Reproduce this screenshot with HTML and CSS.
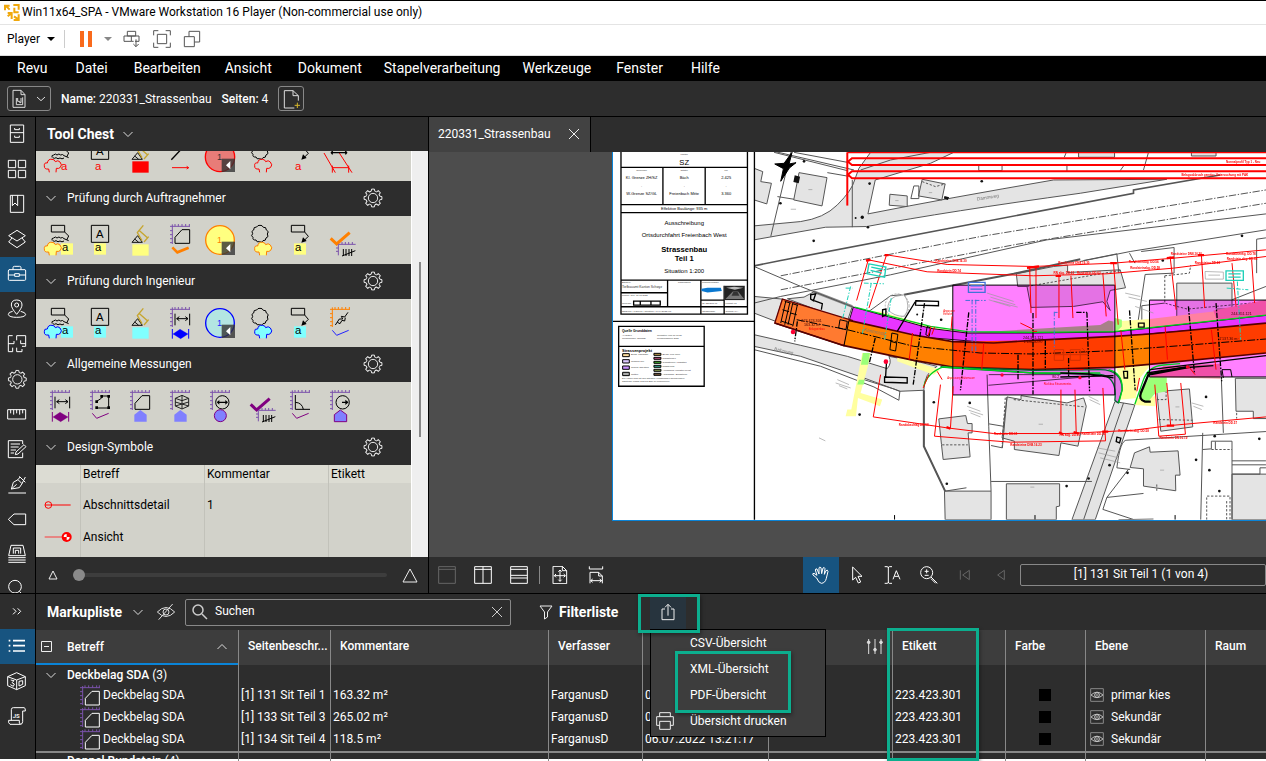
FILE: index.html
```html
<!DOCTYPE html>
<html lang="de">
<head>
<meta charset="utf-8">
<title>Win11x64_SPA - VMware Workstation 16 Player</title>
<link rel="stylesheet" href="styles.css">
</head>
<body>
<svg class="defs" aria-hidden="true">
  <defs>
    <g id="tooth"><path d="M-5.4-20.3L-4.2-26.7H4.2L5.4-20.3Q8-19.6 10.5-18.2"/></g>
    <symbol id="gear" viewBox="-30 -30 60 60"><g fill="none" stroke="#eee" stroke-width="3"><use href="#tooth"/><use href="#tooth" transform="rotate(45)"/><use href="#tooth" transform="rotate(90)"/><use href="#tooth" transform="rotate(135)"/><use href="#tooth" transform="rotate(180)"/><use href="#tooth" transform="rotate(225)"/><use href="#tooth" transform="rotate(270)"/><use href="#tooth" transform="rotate(315)"/><circle r="14"/></g></symbol>
    <symbol id="chev" viewBox="0 0 12 12"><path d="M1.500 4L6 8.500L10.500 4" fill="none" stroke="#ddd"/></symbol>
    <g id="axis" fill="none" stroke="#7b52ab" stroke-width="3"><path d="M37 25V84M30 31H90M45 31V24M55 31V24M66 31V24M77 31V24M88 31V24M37 44H30M37 56H30M37 68H30M37 80H30"/></g>
    <g id="cloudlow"><path d="M28 118L26 108Q12 110 13 98Q12 88 22 90Q24 77 36 79Q44 79 46 86Q54 80 60 87Q68 96 61 103Q56 108 49 106L48 118" stroke-width="3"/></g>
    <g id="squig" fill="none" stroke="#000" stroke-width="3"><path d="M34 28H74V48H34ZM74 48L86 60L80 72M36 73Q34 66 41 66Q46 60 51 66Q57 60 62 66Q68 62 72 68L86 74M38 74Q44 78 48 74Q54 80 60 75Q66 80 72 75"/></g>
    <g id="abox" fill="none" stroke="#000" stroke-width="3"><path d="M34 28H86V79H34Z"/></g>
    <g id="marker" fill="none"><path d="M36 79L53 59L67 79ZM44 69L56 79" stroke="#111" stroke-width="3"/><path d="M70 28L52 50L66 74M56 42L84 67M72 78L86 62" stroke="#c6a52e" stroke-width="4"/></g>
    <g id="badge"><path d="M65 77H105V117H65Z" fill="#333" opacity=".8"/><path d="M91 84V109L78 97Z" fill="#fff"/></g>
    <g id="scallop"><path d="M60 28Q67 27 70 34Q79 32 79 42Q89 46 82 54Q88 63 78 66Q78 75 69 74Q66 82 58 77Q50 80 48 72Q37 73 39 64Q31 60 38 53Q32 45 41 42Q40 32 50 33Q53 27 60 28Z" fill="none" stroke="#000" stroke-width="3"/></g>
    <g id="callout"><path d="M34 28H74V48H34ZM74 48L85 61L74 72" fill="none" stroke="#000" stroke-width="3"/><path d="M64 80L69 64L80 75Z"/></g>
    <g id="vmeas"><path d="M45 44V79M89 44V79M50 59H84M58 53L50 59L58 65M76 53L84 59L76 65" fill="none" stroke="#000" stroke-width="3"/></g>
    <g id="width"><path d="M37 90V119M86 90V119" stroke-width="3"/><path d="M39 105L60 91L84 105L62 119Z"/></g>
    <g id="area"><path d="M45 82V64L66 41H89V82Z" fill="none" stroke-width="3"/></g>
    <g id="tally"><path d="M55 118V85H107M55 96H48M55 106H48M66 85V78M76 85V78M86 85V78M97 85V78" fill="none" stroke="#7b52ab" stroke-width="3"/><path d="M70 99V120M78 99V120M87 99V120M95 99V120M66 120L106 104" fill="none" stroke="#000" stroke-width="3"/></g>
    <symbol id="eye" viewBox="0 0 42 42"><path d="M2 2H40V40H2Z" fill="none" stroke="#888" stroke-width="3"/><path d="M3 21Q21 4 39 21Q21 37 3 21Z" fill="none" stroke="#bbb" stroke-width="3"/><circle cx="21" cy="21" r="7" fill="none" stroke="#ccc" stroke-width="3"/><circle cx="21" cy="21" r="2" fill="#fff"/></symbol>
    <symbol id="markup" viewBox="0 0 60 66"><path d="M8 3V60M0 8H60M15 8V1M26 8V1M38 8V1M50 8V1M58 8V1M8 20H0M8 32H0M8 44H0M8 56H0" fill="none" stroke="#7b52ab" stroke-width="3"/><path d="M16 60V40L36 19H58V60Z" fill="none" stroke="#fff" stroke-width="3"/></symbol>
  </defs>
</svg>

<header class="titlebar">
  <svg width="18" height="18" viewBox="0 0 54 54" fill="none" stroke="#f0a80c" stroke-width="6"><path d="M6 22V8H20M8 8L20 20M31 6H47V20M14 30H26V48M26 30L14 40M33 40L47 50M47 34V51H32M34 14V28H47"/></svg>
  <span>Win11x64_SPA - VMware Workstation 16 Player (Non-commercial use only)</span>
</header>
<div class="vmbar">
  <button class="player">Player <i class="tri"></i></button>
  <span class="vsep"></span>
  <button aria-label="Pause" class="ib"><svg width="30" height="26" viewBox="0 0 30 26"><path d="M6 5H10V21H6ZM14 5H18V21H14Z" fill="#f96a1c"/></svg></button>
  <i class="tri dim"></i>
  <button aria-label="Send keys" class="ib keys"><svg width="18" height="18" viewBox="0 0 54 54" fill="none" stroke="#555" stroke-width="3"><path d="M13 4H38V18H13ZM3 18H25V34H3ZM25 18H48V34H36M25 34H32M39 28V50M31 42L39 50L47 42"/></svg></button>
  <button aria-label="Fullscreen" class="ib"><svg width="18" height="18" viewBox="0 0 54 54" fill="none" stroke="#555" stroke-width="3"><path d="M2 16V2H16M38 2H52V16M52 38V52H38M16 52H2V38M13 13H41V41H13Z"/></svg></button>
  <button aria-label="Unity" class="ib"><svg width="18" height="18" viewBox="0 0 54 54" fill="none" stroke="#555" stroke-width="3"><path d="M4 20H34V50H4ZM18 20V4H50V36H34"/></svg></button>
</div>
<nav class="menubar">
  <a href="#">Revu</a><a href="#">Datei</a><a href="#">Bearbeiten</a><a href="#">Ansicht</a><a href="#">Dokument</a><a href="#">Stapelverarbeitung</a><a href="#">Werkzeuge</a><a href="#">Fenster</a><a href="#">Hilfe</a>
</nav>
<div class="docbar">
  <button class="outline wide" aria-label="Dokument"><svg width="42" height="22" viewBox="0 0 126 66" fill="none" stroke="#ddd" stroke-width="3"><path d="M15 7H39L51 20V58H15ZM39 7V20H51"/><path d="M25 30V50H44V28M29 30V40H35V44H39V30"/><path d="M87 27L99 38L111 27"/></svg></button>
  <span class="name"><b>Name:</b> 220331_Strassenbau</span>
  <span><b>Seiten:</b> 4</span>
  <button class="outline" aria-label="Neue Seite"><svg width="24" height="22" viewBox="0 0 72 66" fill="none" stroke="#ddd" stroke-width="3"><path d="M58 38V23L42 8H16V60H46M42 8V23H58"/><path d="M47 52H63M55 44V60" stroke="#d4b52b"/></svg></button>
</div>

<main class="work">
  <nav class="rail" aria-label="Bereiche">
    <button aria-label="Dateizugriff"><svg viewBox="0 0 105 105"><path d="M31 24H71V76H31ZM31 47H71M44 33V38H58V33M44 56V61H58V56"/></svg></button>
    <button aria-label="Miniaturen"><svg viewBox="0 0 105 105"><path d="M25 25H47V47H25ZM55 25H77V47H55ZM25 55H47V77H25ZM55 55H77V77H55Z"/></svg></button>
    <button aria-label="Lesezeichen"><svg viewBox="0 0 105 105"><path d="M31 25H71V76H31ZM37 25V56L45 48L53 56V25"/></svg></button>
    <button aria-label="Ebenen"><svg viewBox="0 0 105 105"><path d="M51 25L76 41L51 57L26 41ZM36 48L26 60L51 77L76 60L66 48"/></svg></button>
    <button aria-label="Tool Chest" class="on"><svg viewBox="0 0 105 105"><path d="M27 38H75Q77 38 77 42V67Q77 70 74 70H28Q25 70 25 67V42Q25 38 28 38ZM39 38V32Q39 28 43 28H59Q63 28 63 32V38M25 54H44M58 54H77M44 50H58V58H44Z"/></svg></button>
    <button aria-label="Orte"><svg viewBox="0 0 105 105"><path d="M50 67Q34 48 34 39Q34 24 50 24Q66 24 66 39Q66 48 50 67ZM38 58Q24 60 25 68Q28 76 50 76Q74 76 77 68Q77 61 62 58"/><circle cx="50" cy="39" r="6"/></svg></button>
    <button aria-label="Räume"><svg viewBox="0 0 105 105"><path d="M38 26H25V74H38V62M50 26H77V58H66M50 26V40M25 50H42M42 42V50M62 40V50H77M50 62V74H66V66"/></svg></button>
    <button aria-label="Einstellungen"><svg class="gear" viewBox="-52 -52 105 105"><use href="#gear" x="-30" y="-30" width="60" height="60"/></svg></button>
    <button aria-label="Messungen"><svg viewBox="0 0 105 105"><path d="M23 38H77V66H23ZM32 38V49M41 38V53M50 38V49M59 38V53M68 38V49"/></svg></button>
    <button aria-label="Formulare"><svg viewBox="0 0 105 105"><path d="M68 36V26H25V77H68V62M32 36H60M32 45H56M32 54H48M32 63H42M48 60L72 38L78 44L54 66L46 68Z"/></svg></button>
    <button aria-label="Signaturen"><svg viewBox="0 0 105 105"><path d="M25 78H78M34 66L40 46L54 38L66 50L58 62ZM34 66L50 52M58 28L76 46M66 50L76 30M54 38L60 30"/></svg></button>
    <button aria-label="Tags"><svg viewBox="0 0 105 105"><path d="M25 52L42 36H77V68H42Z"/></svg></button>
    <button aria-label="Sets"><svg viewBox="0 0 105 105"><path d="M33 25H69L76 56H26ZM40 50V33H62V50M46 50V40H56V50M25 62H77M25 69H77M25 76H77"/></svg></button>
    <button aria-label="Suchen"><svg viewBox="0 0 105 105"><circle cx="45" cy="44" r="19"/><path d="M58 58L72 72"/></svg></button>
  </nav>

  <section class="chest">
    <h2 class="panelhead">Tool Chest <svg class="c12" width="12" height="12"><use href="#chev"/></svg></h2>
    <div class="scroll">
      <div class="sets">
        <div class="tools first">
          <svg viewBox="0 0 120 144"><use href="#squig"/><use href="#cloudlow" fill="none" stroke="red"/><text x="63" y="110" fill="red">a</text></svg>
          <svg viewBox="0 0 120 144"><use href="#abox"/><text x="48" y="67" class="A">A</text><text x="45" y="110" fill="red">a</text></svg>
          <svg viewBox="0 0 120 144"><use href="#marker"/><path d="M37 85H86V119H37Z" fill="red"/></svg>
          <svg viewBox="0 0 120 144"><path d="M34 80L72 40" stroke="#000" stroke-width="4"/><path d="M36 104H86M80 100L86 104L80 108" stroke="red" stroke-width="3" fill="none"/></svg>
          <svg viewBox="0 0 120 144"><circle cx="60" cy="72" r="44" fill="#e87c78" stroke="red" stroke-width="4"/><text x="51" y="82" class="one" fill="#333">1</text><use href="#badge"/></svg>
          <svg viewBox="0 0 120 144"><use href="#scallop"/><use href="#cloudlow" x="31" fill="none" stroke="red"/></svg>
          <svg viewBox="0 0 120 144"><use href="#callout"/><text x="45" y="110" fill="red">a</text></svg>
          <svg viewBox="0 0 120 144"><path d="M12 60L46 119M58 60L96 119M37 104H86M37 98V119M86 98V119" stroke="red" stroke-width="3"/><path d="M35 59H80M38 54L34 59L38 64M76 54L80 59L76 64" fill="none" stroke="#000" stroke-width="4"/></svg>
        </div>
        <h3><svg class="c12" width="12" height="12"><use href="#chev"/></svg><span>Prüfung durch Auftragnehmer</span><button aria-label="Optionen"><svg width="20" height="20"><use href="#gear"/></svg></button></h3>
        <div class="tools">
          <svg viewBox="0 0 120 144"><use href="#squig"/><path d="M63 82H99V116H63Z" fill="#ffff80"/><use href="#cloudlow" fill="#ffff80" stroke="#ff8000"/><text x="66" y="106">a</text></svg>
          <svg viewBox="0 0 120 144"><use href="#abox"/><text x="48" y="67" class="A">A</text><path d="M42 82H78V116H42Z" fill="#ffff80"/><text x="45" y="106">a</text></svg>
          <svg viewBox="0 0 120 144"><use href="#marker"/><path d="M37 85H86V119H37Z" fill="#ffff80"/></svg>
          <svg viewBox="0 0 120 144"><use href="#axis"/><use href="#area" stroke="#000"/><path d="M37 94L52 109L86 95" fill="none" stroke="#ff8000" stroke-width="8"/></svg>
          <svg viewBox="0 0 120 144"><circle cx="60" cy="72" r="43" fill="#ffff80" stroke="#ff8000" stroke-width="4"/><text x="51" y="81" class="one" fill="#ff8000">1</text><use href="#badge"/></svg>
          <svg viewBox="0 0 120 144"><use href="#scallop"/><use href="#cloudlow" x="31" fill="#ffff80" stroke="#ff8000"/></svg>
          <svg viewBox="0 0 120 144"><use href="#callout"/><path d="M42 82H78V116H42Z" fill="#ffff80"/><text x="45" y="106">a</text></svg>
          <svg viewBox="0 0 120 144"><path d="M32 67L50 84L89 50" fill="none" stroke="#ff8000" stroke-width="9"/><use href="#tally"/></svg>
        </div>
        <h3><svg class="c12" width="12" height="12"><use href="#chev"/></svg><span>Prüfung durch Ingenieur</span><button aria-label="Optionen"><svg width="20" height="20"><use href="#gear"/></svg></button></h3>
        <div class="tools">
          <svg viewBox="0 0 120 144"><use href="#squig"/><path d="M63 82H99V116H63Z" fill="#80ffff"/><use href="#cloudlow" fill="#80ffff" stroke="#00f"/><text x="66" y="106">a</text></svg>
          <svg viewBox="0 0 120 144"><use href="#abox"/><text x="48" y="67" class="A">A</text><path d="M42 82H78V116H42Z" fill="#80ffff"/><text x="45" y="106">a</text></svg>
          <svg viewBox="0 0 120 144"><use href="#marker"/><path d="M37 85H86V119H37Z" fill="#80ffff"/></svg>
          <svg viewBox="0 0 120 144"><use href="#axis"/><use href="#vmeas"/><use href="#width" fill="#00f" stroke="#00f"/></svg>
          <svg viewBox="0 0 120 144"><circle cx="60" cy="72" r="43" fill="#b3e5e2" stroke="#00f" stroke-width="4"/><text x="51" y="81" class="one" fill="#22f">1</text><use href="#badge"/></svg>
          <svg viewBox="0 0 120 144"><use href="#scallop"/><use href="#cloudlow" x="31" fill="#80ffff" stroke="#00f"/></svg>
          <svg viewBox="0 0 120 144"><use href="#callout"/><path d="M42 82H78V116H42Z" fill="#80ffff"/><text x="45" y="106">a</text></svg>
          <svg viewBox="0 0 120 144"><path d="M37 25V84M30 31H90M45 31V24M55 31V24M66 31V24M77 31V24M88 31V24M37 44H30M37 56H30M37 68H30M37 80H30" stroke="#ff8000" stroke-width="3"/><path d="M46 78L58 60H68L64 52L74 54L84 40M52 70L60 74L66 64L74 66L76 56" fill="none" stroke="#000" stroke-width="3"/><path d="M37 94L50 109L86 94" fill="none" stroke="#22f" stroke-width="3"/></svg>
        </div>
        <h3><svg class="c12" width="12" height="12"><use href="#chev"/></svg><span>Allgemeine Messungen</span><button aria-label="Optionen"><svg width="20" height="20"><use href="#gear"/></svg></button></h3>
        <div class="tools">
          <svg viewBox="0 0 120 144"><use href="#axis"/><use href="#vmeas"/><use href="#width" fill="#800080" stroke="#800080"/></svg>
          <svg viewBox="0 0 120 144"><use href="#axis"/><path d="M49 78H86V42H65V48L49 59" fill="none" stroke="#000" stroke-width="3"/><path d="M46 73H54V81H46ZM82 73H90V81H82ZM82 39H90V47H82ZM61 39H69V47H61ZM46 55H54V63H46Z"/><path d="M37 94L50 109L86 94" fill="none" stroke="#800080" stroke-width="3"/></svg>
          <svg viewBox="0 0 120 144"><use href="#axis"/><use href="#area" stroke="#000"/><path d="M43 119V98L61 84L80 98V119Z" fill="#8080ff"/></svg>
          <svg viewBox="0 0 120 144"><use href="#axis"/><path d="M46 49L66 40L86 49V72L66 81L46 72ZM46 49L66 56L86 49M66 40V81M46 60L86 72M86 60L46 72" fill="none" stroke="#222" stroke-width="3"/><path d="M43 119V98L61 84L80 98V119Z" fill="#8080ff"/></svg>
          <svg viewBox="0 0 120 144"><use href="#axis"/><circle cx="67" cy="61" r="20" fill="none" stroke="#000" stroke-width="3"/><path d="M50 61L58 54V59H76V54L84 61L76 68V63H58V68Z"/><circle cx="61" cy="101" r="18" fill="#8080ff" stroke="#800080" stroke-width="3"/></svg>
          <svg viewBox="0 0 120 144"><path d="M32 67L50 84L89 50" fill="none" stroke="#800080" stroke-width="9"/><use href="#tally"/></svg>
          <svg viewBox="0 0 120 144"><use href="#axis"/><path d="M46 39V82H90M46 61Q66 62 70 82" fill="none" stroke="#000" stroke-width="3"/><path d="M37 94L50 109L86 94" fill="none" stroke="#800080" stroke-width="3"/></svg>
          <svg viewBox="0 0 120 144"><use href="#axis"/><circle cx="68" cy="61" r="20" fill="none" stroke="#000" stroke-width="3"/><path d="M66 59H76V53L86 61L76 69V63H66Z"/><path d="M43 119V98L61 84L80 98V119Z" fill="#8080ff" stroke="#800080" stroke-width="3"/></svg>
        </div>
        <h3><svg class="c12" width="12" height="12"><use href="#chev"/></svg><span>Design-Symbole</span><button aria-label="Optionen"><svg width="20" height="20"><use href="#gear"/></svg></button></h3>
        <table class="symbols">
          <colgroup><col class="w44"><col class="w124"><col class="w124"><col></colgroup>
          <thead><tr><th></th><th>Betreff</th><th>Kommentar</th><th>Etikett</th></tr></thead>
          <tbody>
            <tr class="gap"><td></td><td></td><td></td><td></td></tr>
            <tr><td><svg width="44" height="30" viewBox="0 0 132 90" fill="none" stroke="red" stroke-width="3"><circle cx="37" cy="45" r="10"/><path d="M27 45H104"/></svg></td><td>Abschnittsdetail</td><td>1</td><td></td></tr>
            <tr><td><svg width="44" height="30" viewBox="0 0 132 90"><path d="M26 45H80" stroke="#f06060" stroke-width="4"/><circle cx="92" cy="45" r="15" fill="red"/><path d="M92 45V36A9 9 0 0 0 83 45ZM92 45V54A9 9 0 0 0 101 45Z" fill="#fff"/></svg></td><td>Ansicht</td><td></td><td></td></tr>
            <tr><td><svg width="44" height="30" viewBox="0 0 132 90"><path d="M60 14L66 8L72 14Z" fill="#e66"/></svg></td><td></td><td></td><td></td></tr>
          </tbody>
        </table>
      </div>
      <div class="sbar"><i></i></div>
    </div>
    <div class="zoomrow">
      <svg width="10" height="10" viewBox="0 0 10 10" fill="none" stroke="#eee"><path d="M5 1L9 9H1Z"/></svg>
      <input type="range" min="0" max="100" value="0" aria-label="Symbolgrösse">
      <svg width="16" height="15" viewBox="0 0 16 15" fill="none" stroke="#eee"><path d="M8 1L15 14H1Z"/></svg>
    </div>
  </section>

  <section class="view">
    <div class="tabs"><a class="tab" href="#">220331_Strassenbau <svg width="12" height="12" viewBox="0 0 12 12" stroke="#eee"><path d="M1 1L11 11M11 1L1 11"/></svg></a></div>
    <div class="canvas">
      <svg class="plan" viewBox="612 152 654 369" preserveAspectRatio="xMinYMin slice">
        <defs><clipPath id="mapclip"><path d="M-79 30H3000V1141H-79Z"/></clipPath></defs>
        <path d="M612 152H4000V521H612Z" fill="#fff"/>
        <g transform="translate(780 140) scale(.3333)">
          <g clip-path="url(#mapclip)">
            <g fill="#e4e4e4" stroke="#555" stroke-width="3">
              <path d="M-80 258L60 245Q130 235 170 195Q215 150 222 120L235 85L270 37H520L450 70L284 120L262 222Q500 175 820 120L1160 118L900 160Q500 215 258 260L135 262L-80 300Z"/>
              <path d="M55 98L139 113L124 198L39 180ZM328 163L380 168V200L326 196ZM425 118L494 132L484 180L414 168ZM-80 85L-54 95L-60 125L-28 130L-42 192L-80 180Z"/>
              <path d="M895 37H1003V52H895ZM1234 37H1308V48H1234Z"/>
              <path d="M100 456L215 500L200 545L20 477L70 472Z"/>
              <path d="M-80 470L5 478L-15 545L-80 520Z"/>
              <path d="M-80 585L60 617L200 650L320 687Q335 670 325 650L420 668L470 680Q430 700 430 752L358 755L250 715L60 650L-80 620Z"/>
              <path d="M708 402L820 380L862 376V398L1020 390L1036 444L990 452L980 485L990 512L968 486L880 500L752 503L740 440L712 440Z"/>
              <path d="M1190 430H1356V508H1310V535H1190Z"/>
              <path d="M475 838L556 828L561 852H575V880H563L569 952L488 960L483 915Z"/>
              <path d="M680 772L722 780V768L860 790L910 775L918 800L893 920L842 910L836 948L702 930V905L665 895Z"/>
              <path d="M1004 786L1064 796L945 1141H875ZM1030 790L910 1141" />
              <path d="M1130 756L1228 748L1238 862L1142 875Z"/>
              <path d="M1063 940L1108 922L1110 938L1194 934L1200 1007H1186L1187 1054L1090 1040V988L1050 984Z"/>
              <path d="M492 1055L632 1055V1141H494ZM678 1033H838V1100L828 1102V1141H678Z"/>
              <path d="M1366 716H1470V837H1420V815H1368ZM1356 1004H1470V1141H1356Z"/>
            </g>
            <g fill="none" stroke="#555" stroke-width="3">
              <path d="M-80 378L0 362L1060 160V150L1320 105" stroke-width="5"/>
              <path d="M0 470L330 405L800 300L1458 222L3000 60M-80 490L0 470"/>
              <path d="M100 456L215 500" stroke="#888" stroke-width="8"/>
              <path d="M370 465L700 402L900 358" stroke-width="6"/>
              <path d="M900 365L1050 335L1458 270M330 468L362 465M330 468L265 515M910 362L1010 342L1016 400M1048 340L1064 370M1083 335L1182 323V400L1095 404L1073 550L1108 545M1085 545V498L1154 490M-80 380L60 440L220 503M-80 20L220 90M-20 37L200 92M40 37L200 67M1356 480L1458 440"/>
              <path d="M-30 290L30 37M-10 170L40 178M215 120V262M140 98L210 110M858 37L852 52M595 78V92H665V78M400 138H415V176H391ZM240 90L330 60L450 37M1090 90L1105 37M1020 92L1030 78M860 95V78"/>
              <path d="M-80 630L120 680L280 742L355 782L358 755L340 748L250 720M430 752V920L494 1055L558 1045M620 705L625 860L632 1055M632 1026H935M626 853L668 860M632 918L666 925L680 772M624 737L985 706M625 705H840V690"/>
              <path d="M430 752V920L494 1055" stroke-width="6"/>
              <path d="M1010 985Q1020 900 1040 902L1458 876M1046 988L980 1074L968 1110L1062 1141M980 1074L1090 1062M1010 985L1050 990M1015 1141L1120 1139M1330 880L1324 716M1268 880L1262 1141M1268 930L1294 928V905H1356V1141M1306 906V930M1356 964H1458M1356 976H1458M1356 1004H1440V985H1458M1430 400V298L1458 294"/>
              <path d="M1154 408L1228 400L1232 376M1154 408V490L1190 500L1222 508L1456 486M1370 820V837M700 780L914 802M1130 780H1158V756M1136 840L1238 842M665 925L675 770M1280 1141V1070H1350V1141M1340 1085V1141M485 916H562M425 125L465 140L494 132M1294 930H1356M740 440L1020 392M1130 1035V1055" stroke-dasharray="7 5"/>
              <path d="M0 408L600 290L1458 150M0 450L700 315L1458 190" stroke-dasharray="22 5 4 5"/>
              <path d="M344 470Q320 482 322 510Q340 530 372 530Q392 500 372 465Z" stroke="#888" stroke-width="2"/>
              <circle cx="350" cy="498" r="36" stroke="#999" stroke-width="2" stroke-dasharray="6 4"/>
            </g>
            <path d="M245 640H270L262 680L240 760L305 780L298 800L232 775L226 830H195L200 810H212Z" fill="#ffffa0"/>
            <path d="M247 640H268L262 675H241ZM235 720H252L250 735H230Z" fill="#9cff78"/>
            <path d="M255 515H300L470 565L560 578L440 575ZM1004 545L1108 538L1300 515L1458 496V530L1110 568L1108 680L1075 720L1064 796L1125 800V770L1004 782L1030 740L1010 690ZM350 650L480 690L460 705L350 665Z" fill="#ffffa0"/>
            <path d="M1004 535L1025 540V560L1004 580ZM1108 712H1160V755L1125 762L1100 790L1078 770Z" fill="#9cff78"/>
            <path d="M1300 512L1458 480V525L1310 540ZM1108 712L1150 680L1320 672V717Z" fill="#f0a0a8"/>
            <g class="mul"><path d="M517 436H1004V766H517Z" fill="#ff80ff"/><path d="M1108 481H3000V712H1108Z" fill="#ff80ff"/></g>
            <path d="M560 580L960 556L985 542L1000 545V580Z" fill="#a88088"/>
            <path d="M218 502L450 566L560 580H760L1000 577L1458 527L3000 370V520L1458 552L1000 592L640 610L400 590L205 545Z" fill="#e935ff" stroke="#200020" stroke-width="3"/>
            <path d="M5 478L-18 550L190 618L215 542Z" fill="#ff7a30" stroke="#600" stroke-width="4"/>
            <path d="M205 542L400 586L517 606V682L400 662L190 618ZM1004 590L1108 583V674L1004 683Z" fill="#ff8000"/>
            <path d="M517 606L760 602L1004 590V683L760 690L517 682ZM1108 583L1458 550L3000 400V490L1458 640L1108 674Z" fill="#ff3c00"/>
            <path d="M205 542L400 586L517 606L640 610L760 602L1004 590L1108 583L1458 550M-18 550L190 618L400 662L517 682L760 690L1004 683L1108 674L1458 640" fill="none" stroke="#500" stroke-width="5"/>
            <path d="M480 682L760 692L960 690Q1025 690 1026 750L1014 790L1004 782Q1012 712 960 704L760 700Z" fill="#e27ae8" stroke="#063" stroke-width="4"/>
            <path d="M222 502L450 560L560 576L760 578L1000 576L1458 526M430 740Q440 700 488 682L760 700L960 700M985 690Q1028 700 1026 750L1016 790M1064 794L1090 720Q1105 680 1150 676L1200 672" fill="none" stroke="#00d020" stroke-width="4"/>
            <path d="M1112 786H1095Q1075 780 1082 760L1105 705L1225 682" fill="none" stroke="#000" stroke-width="7"/>
            <path d="M1110 690L1458 648M1100 700L1200 685L1300 678M840 700L925 703L1000 715M840 712L1000 708" fill="none" stroke="#000" stroke-width="4"/>
            <g fill="none" stroke="#000" stroke-width="3">
              <path d="M517 436H1004V766H517ZM1108 481H1500M1108 481V712H1500M1330 715L1326 690H1352L1356 712M205 542L190 618"/>
              <path d="M15 485L0 550M27 490L12 555M36 490L22 555M50 495L36 560M12 485L30 490M5 510L25 516M36 492L52 497M30 520L48 525M2 544L36 556M334 580L352 584L345 634L328 630ZM330 605L348 610M178 540L200 545L196 570L174 565ZM440 560L450 565L446 590L436 585Z"/>
              <path d="M406 483L474 485V498L405 496ZM312 712L380 714V730L312 728ZM404 486L350 575M318 665L315 712M90 465L105 462L98 483L90 478ZM94 480L125 492L122 510M1030 695H1042V715H1032ZM1010 893L1022 896L1018 910L1008 906ZM1075 550H1092V562H1075ZM306 510L316 508V526L306 530Z" stroke-width="4"/>
              <path d="M48 540L200 570L400 620L600 640L760 643L1000 633L1200 618L1458 598" stroke-dasharray="24 5 5 5"/>
              <path d="M565 518L540 752M758 520V765M920 518L928 755M888 518H920M1048 512L1065 752M1225 500L1243 700M1308 490L1325 725M432 490L398 735M713 645V720M795 602V690M865 655V710M284 595L266 670M50 545L42 605" stroke-width="4" stroke-dasharray="16 4 5 4"/>
            </g>
            <path d="M34 37L25 72L46 68L26 84L0 124L8 86L-18 72L10 70Z" fill="#000" stroke="#000" stroke-width="3"/>
            <g fill="#111">
              <circle cx="70" cy="64" r="4"/><circle cx="604" cy="124" r="4"/><circle cx="267" cy="131" r="4"/><circle cx="262" cy="262" r="4"/><circle cx="99" cy="303" r="4"/><circle cx="237" cy="825" r="4"/><circle cx="568" cy="790" r="4"/><circle cx="499" cy="1033" r="4"/><circle cx="1386" cy="288" r="4"/><circle cx="1278" cy="772" r="4"/><circle cx="1248" cy="961" r="4"/><circle cx="1288" cy="992" r="4"/><circle cx="1318" cy="1055" r="4"/><circle cx="1042" cy="1000" r="4"/><circle cx="988" cy="977" r="4"/><circle cx="925" cy="1017" r="4"/><circle cx="859" cy="1040" r="4"/><circle cx="1304" cy="890" r="4"/><circle cx="482" cy="540" r="4"/><circle cx="410" cy="524" r="3"/><circle cx="1148" cy="362" r="4"/><circle cx="460" cy="788" r="4"/><circle cx="1438" cy="898" r="4"/><circle cx="-1" cy="190" r="4"/><circle cx="225" cy="234" r="3"/><circle cx="245" cy="232" r="5"/><path d="M42 106L58 110L54 130L38 126ZM492 168L506 172L502 180L490 176Z"/>
            </g>
            <g fill="#f03" ><circle cx="37" cy="577" r="7"/><circle cx="316" cy="666" r="7"/><circle cx="665" cy="706" r="5"/><circle cx="899" cy="714" r="5"/><circle cx="1222" cy="682" r="5"/></g>
            <g fill="none" stroke="red" stroke-width="3">
              <path d="M200 37V197" stroke-width="6"/>
              <path d="M200 37H3000M1458 55H214L202 65L214 75H3000M1458 94H214L202 104L214 115H3000M1458 55H3000M1458 94H3000" stroke-width="6"/>
              <path d="M228 482L263 360L440 396L760 408L980 402L1180 385L1458 350M265 505L318 345L500 374L760 380L1000 370L1180 355L1458 330M748 380L752 520M767 380V535M836 408V535M872 408L878 535M968 402L978 530M1000 370L1014 555M1170 350L1188 510M1264 345L1274 505M1415 360L1424 490M1356 370L1368 500"/>
              <path d="M300 705L278 832L500 865L640 882L860 882L1060 872L1170 858L1458 832M480 735L462 890L690 908L976 904M518 740L510 865M842 750V882M884 750L888 882M968 745L976 904M1124 735L1136 890L1216 884L1202 730M1160 730L1172 860"/>
              <path d="M396 580L386 660M610 610L604 690M1022 572L1034 690M1155 560L1162 660M1294 570L1308 690M720 550L757 568M756 575L770 575M452 560L442 590M462 562L454 585M470 695L485 720M1225 680L1245 705M860 690L910 690M515 530L512 570M1078 715L1070 755M445 705L428 745" />
              <path d="M822 630H850V662H822ZM870 630H900V662H870ZM822 645H925L905 625" stroke="#d33000"/>
              <path d="M498 863L510 867M740 384L776 380M990 370L1010 370M1160 355L1182 353M1160 858L1182 858M826 408L842 408M1254 346L1272 346M312 346L324 346M256 362L270 360M880 878L896 882M836 878L848 884M966 876L984 876" stroke-width="7"/>
            </g>
            <g fill="none" stroke="#1ed0b8" stroke-width="3">
              <path d="M265 372L316 382L312 412L260 402ZM272 382L306 389M270 392L304 400M1338 393H1390V422H1338ZM1345 402H1382M1345 412H1382" stroke-width="4"/>
              <path d="M210 440L185 540M272 430L245 585M332 475L312 600M1372 425L1382 600M195 445H215M250 430L310 432M1340 445L1405 450"  stroke-dasharray="14 5 4 5"/>
              <g stroke="#4272d8"><path d="M564 428H614V458H564ZM570 438H606M570 448H606" stroke-width="4"/><path d="M575 480V640M586 480V640M822 516V630M555 482H616M822 518H832" stroke-dasharray="14 5 4 5"/></g>
            </g>
            <g fill="none" stroke="#999" stroke-width="2">
              <path d="M620 460L700 485M630 472L705 495M640 484L712 502M625 480L690 500M170 720L205 735M165 730L210 745M175 738L200 748M560 800L600 815M565 812L608 826M570 820L600 832M950 925L1005 935M955 940L1015 955M960 955L1020 970M1035 460L1080 470M1045 472L1100 485M1065 500L1120 520M1235 790L1270 800M1240 800L1265 810M925 770L955 785M928 780L960 795M30 208H46M115 895L134 904M1275 395L1330 397V418H1276ZM1285 406H1320M83 149H95M344 182H354M445 158H455M775 854H788M1140 992H1152M750 1043H762M1186 802H1198"/>
            </g>
            <g class="lbl">
              <text x="1338" y="69">Normalprofil Typ 1 - Neu</text><text x="1204" y="108">Belagsabbruch gemäss Untersuchung mit PAK</text>
              <text x="465" y="368">Randsteine DN8.16.30</text><text x="834" y="374">Randsteine DN8.16.30</text><text x="470" y="398">Randstein DD.74</text><text x="820" y="402">RN abg. DD.63</text><text x="890" y="402">Randstein DD.63</text><text x="1046" y="370">Randsteinabg. DD.56</text><text x="1050" y="388">Randsteinabg. DD.58</text><text x="1172" y="346">Randsteine DN8.16.30</text><text x="1244" y="374">Randsteine DD.63</text><text x="1338" y="345">Randabsenkg. DD.78</text><text x="1340" y="362">Randstein abg. DD.82</text>
              <text x="355" y="858">Randabschlag DD.58</text><text x="640" y="886">Randstein DD.61</text><text x="690" y="918">Randsteine DN8.16.23</text><text x="838" y="888">RN abg. DD.61</text><text x="904" y="886">Randstein DD.61</text><text x="1014" y="878">Randstein abg. DD.58</text><text x="1138" y="898">Randstein DN.16.19</text><text x="1300" y="853">Randstein DD.57</text>
              <text x="500" y="718" class="thin">Anpassung Stützmauer</text><text x="790" y="737" class="thin">Rückbau Strassenentw.</text><text x="84" y="571" class="thin">Belagseinbau</text><text x="488" y="516" class="thin">Anpassen</text><text x="488" y="527" class="thin">Einfahrt</text>
              <g class="dark"><text x="62" y="548">223.423.301</text><text x="70" y="560">163.32 m²</text><text x="728" y="598">244.351.121</text><text x="730" y="611">1'186.50 m²</text><text x="1354" y="527">244.351.121</text><text x="1318" y="602">1'137.36 m²</text><text x="816" y="716">80.2</text></g>
              <g class="grey"><text x="590" y="182" transform="rotate(-9 590 182)">Dammweg</text><text x="-20" y="632" transform="rotate(13 -20 632)">Bahnweg</text><text x="250" y="574" transform="rotate(12 250 574)">Kantonsstr.</text></g>
            </g>
            <path d="M342 1127V1141M764 1127V1141M1185 1127V1141" stroke="#000" stroke-width="3"/>
          </g>
        </g>
        <g transform="translate(600 140) scale(.3333)" class="sheet">
          <path d="M60 30V523H440V30M60 82H440M186 82V194M313 82V194M60 194H440M60 218H440M60 421H440M60 459H200M60 501H440M200 421V501M300 421V523M300 481H370M370 438V523M461 30V1141M36 545H461M53 560H310V740H53ZM53 620H310" fill="none" stroke="#000" stroke-width="4"/>
          <path d="M98 484H178V496H98ZM118 484V496M150 484V496" fill="none" stroke="#000" stroke-width="4"/>
          <path d="M302 447L320 444H360L363 454L320 458L302 454Z" fill="#0a78d0"/>
          <path d="M372 438H432V481H372Z" fill="#222"/><path d="M374 478L396 455H412L430 478Z" fill="#777"/><path d="M392 468L398 456H410L416 468Z" fill="#333"/><path d="M376 444L400 441L428 444L402 450Z" fill="#bbb"/>
          <g text-anchor="middle">
            <text x="250" y="74" class="s24">SZ</text><text x="250" y="45" class="s8">Kanton</text>
            <text x="122" y="93" class="s8">Gemeinde</text><text x="250" y="93" class="s8">Ortsteil</text><text x="376" y="93" class="s8">km</text>
            <text x="122" y="118" class="s12">KI. Grenze ZH/SZ</text><text x="250" y="118" class="s12">Bäch</text><text x="376" y="118" class="s12">2.425</text>
            <text x="122" y="141" class="s8">|</text><text x="250" y="141" class="s8">|</text><text x="376" y="141" class="s8">|</text>
            <text x="122" y="165" class="s12">W-Grenze SZ/GL</text><text x="250" y="165" class="s12">Freienbach Mitte</text><text x="376" y="165" class="s12">3.360</text>
            <text x="250" y="210" class="s12">Effektive Baulänge: 935 m</text>
            <text x="250" y="254" class="s18">Ausschreibung</text><text x="250" y="291" class="s18">Ortsdurchfahrt Freienbach West</text>
            <text x="250" y="337" class="s24 bold">Strassenbau</text><text x="250" y="365" class="s24 bold">Teil 1</text><text x="250" y="401" class="s18">Situation 1:200</text>
            <text x="250" y="430" class="s8">Planprüfung</text>
          </g>
          <g class="s8"><text x="63" y="430">Bauherr:</text><text x="63" y="446" class="s10">Tiefbauamt Kanton Schwyz</text><text x="63" y="470">Projekt, Gez. 31.03.2022</text><text x="63" y="493">Genehm.</text><text x="63" y="517">8272/001 / 1:200/01 / Situation / 14.04.2022 v01</text><text x="304" y="430">Projektverfasser</text><text x="304" y="494">Nr. 8272/01.01</text><text x="304" y="516">Strassenbau</text><text x="374" y="494">Format: 63</text><text x="374" y="516">Geprüft: KIA</text></g>
          <text x="63" y="577" class="s10 bold">Quelle Grunddaten</text>
          <g class="s8"><text x="63" y="589">AV-Daten</text><text x="63" y="599">Terrainmodell, swiss3D</text><text x="168" y="589">Geodaten vom 31.03.21</text><text x="168" y="599">Feldaufnahmen 2021</text></g>
          <text x="63" y="638" class="s12 bold">Strassenprojekt</text>
          <g stroke="#000" stroke-width="3"><path d="M65 642H85V651H65Z" fill="#ffe0a0"/><path d="M65 660H85V670H65Z" fill="#dcc8ff"/><path d="M65 679H85V689H65Z" fill="#c890ff"/><path d="M65 698H85V708H65Z" fill="#aaa"/><path d="M159 641H180V647H159Z" fill="#c0a050"/><path d="M159 653H180V659H159Z" fill="#c05080"/><path d="M159 665H180V671H159Z" fill="#40b030"/><path d="M159 677H180V683H159Z" fill="#30a890"/><path d="M159 689H180V695H159Z" fill="#90a050"/><path d="M159 701H180V707H159Z" fill="#806040"/></g>
          <g class="s8"><text x="90" y="647">Belag, Fahrbahn</text><text x="90" y="667">Gehweg neu</text><text x="90" y="686">Geweg, öffentlich</text><text x="90" y="705">Trottoir</text><text x="185" y="647">Belag, Kies open</text><text x="185" y="658">Randstreifen</text><text x="185" y="670">Grünstreifen / Rabatten</text><text x="185" y="682">Pflästerung</text><text x="185" y="694">Anpassung Vorplätze privat</text><text x="185" y="706">Abschlüsse, Bundsteine</text><text x="63" y="719">Die Höhen sind mit den örtlichen Verhältnissen abzugleichen.</text><text x="63" y="727">Sämtliche Masse sind am Bau zu kontrollieren.</text></g>
        </g>
      </svg>
    </div>
    <div class="statusbar">
      <button aria-label="Einzelansicht" class="dimmed"><svg viewBox="0 0 54 54"><path d="M2 2H52V52H2ZM2 10H52"/></svg></button>
      <button aria-label="Vertikal teilen"><svg viewBox="0 0 54 54"><path d="M2 2H52V52H2ZM2 10H52M27 2V52"/></svg></button>
      <button aria-label="Horizontal teilen"><svg viewBox="0 0 54 54"><path d="M2 2H52V52H2ZM2 10H52M2 28H52M2 36H52"/></svg></button>
      <span class="vline"></span>
      <button aria-label="Seite anpassen"><svg viewBox="0 0 54 54"><path d="M6 1H34L47 14V53H6ZM34 1V14H47M27 12V46M10 29H43M22 17L27 12L32 17M22 41L27 46L32 41M15 24L10 29L15 34M38 24L43 29L38 34"/></svg></button>
      <button aria-label="Breite anpassen"><svg viewBox="0 0 54 54"><path d="M7 1V9H47V1M9 52V19H35L46 30V52M35 19V30H46M11 44H44M17 39L11 44L17 49M38 39L44 44L38 49"/></svg></button>
      <span class="push"></span>
      <button aria-label="Schwenken" class="on"><svg viewBox="0 0 54 54"><path d="M14 36L3 27Q0 22 6 22L15 28L10 12Q11 7 15 9L21 24V6Q22 1 27 5L29 23L33 6Q37 2 39 8L37 25L42 14Q47 10 48 16L43 37Q40 51 28 52Q20 51 14 36Z"/></svg></button>
      <button aria-label="Auswählen"><svg viewBox="0 0 54 54"><path d="M14 3V42L23 34L31 51L38 48L30 31H42Z"/></svg></button>
      <button aria-label="Text auswählen"><svg viewBox="0 0 54 54"><path d="M2 2H10Q13 2 13 6V48Q13 52 10 52H2M24 2H16Q13 2 13 6M13 48Q13 52 16 52H24M27 40L37 14L48 40M31 31H44"/></svg></button>
      <button aria-label="Zoom"><svg viewBox="0 0 54 54"><circle cx="20" cy="20" r="18"/><path d="M33 33L52 52M33 38L47 52M14 16H26M20 10V22M14 28H26"/></svg></button>
      <button aria-label="Erste Seite" class="dimmed"><svg viewBox="0 0 54 54"><path d="M13 13V41M40 13V41L20 27Z"/></svg></button>
      <button aria-label="Vorherige Seite" class="dimmed"><svg viewBox="0 0 54 54"><path d="M37 13V41L17 27Z"/></svg></button>
      <input class="pagebox" type="text" aria-label="Seite" value="[1] 131 Sit Teil 1 (1 von 4)">
    </div>
  </section>
</main>

<section class="bottom">
  <nav class="rail" aria-label="Untere Bereiche">
    <button aria-label="Mehr"><svg viewBox="0 0 105 105"><path d="M39 43L48 52L39 61M53 43L62 52L53 61"/></svg></button>
    <button aria-label="Markupliste" class="on"><svg viewBox="0 0 105 105"><path d="M39 35H75M39 50H75M39 66H75M26 35H31M26 50H31M26 66H31" stroke-width="5"/></svg></button>
    <button aria-label="3D"><svg viewBox="0 0 105 105"><path d="M23 38L50 26L76 38V65L50 77L23 65ZM23 38L50 48L76 38M50 48V77M32 48L42 50L36 56L43 60L40 67L31 62M57 52L68 50V61L57 66Z"/></svg></button>
    <button aria-label="JavaScript"><svg viewBox="0 0 105 105"><path d="M34 64V32Q34 26 40 26H72Q77 26 76 36H68V68Q68 76 60 76H30Q24 72 26 64H58Q56 74 62 76"/><text x="38" y="57" class="js">JS</text></svg></button>
  </nav>
  <div class="list">
    <div class="listhead">
      <h2>Markupliste <svg class="c12" width="12" height="12"><use href="#chev"/></svg></h2>
      <button class="hide" aria-label="Markups ausblenden"><svg width="20" height="18" viewBox="0 0 60 54" fill="none" stroke="#ddd" stroke-width="3"><path d="M4 27Q30 0 56 27Q30 54 4 27ZM50 3L8 50"/><circle cx="30" cy="27" r="9"/></svg></button>
      <div class="search">
        <svg width="16" height="16" viewBox="0 0 16 16" fill="none" stroke="#ccc" stroke-width="1.500"><circle cx="6" cy="6" r="5"/><path d="M10 10L15 15"/></svg>
        <input type="text" aria-label="Suchen" value="Suchen">
        <button aria-label="Löschen"><svg width="12" height="12" viewBox="0 0 12 12" stroke="#ccc"><path d="M1 1L11 11M11 1L1 11"/></svg></button>
      </div>
      <button class="filter"><svg width="14" height="15" viewBox="0 0 14 15" fill="none" stroke="#eee"><path d="M1 1H13L8.500 7V12L5.500 14V7Z"/></svg>Filterliste</button>
      <div class="share">
        <button aria-label="Exportieren"><svg width="16" height="18" viewBox="0 0 48 54" fill="none" stroke="#eee" stroke-width="3"><path d="M15 18H6V50H42V18H33M24 38V4M15 13L24 4L33 13"/></svg></button>
        <i class="hl"></i>
        <div class="menu">
          <button>CSV-Übersicht</button>
          <button>XML-Übersicht</button>
          <button>PDF-Übersicht</button>
          <button><svg width="18" height="18" viewBox="0 0 54 54" fill="none" stroke="#eee" stroke-width="3"><path d="M11 14V2H43V14M11 40H2V14H52V40H43M11 28H43V52H11Z"/></svg>Übersicht drucken</button>
          <i class="hl"></i>
        </div>
      </div>
    </div>
    <table class="markups">
      <colgroup><col class="k1"><col class="k2"><col class="k3"><col class="k4"><col class="k5"><col class="k6"><col class="k7"><col class="k8"><col class="k9"><col></colgroup>
      <thead><tr>
        <th class="sorted"><div class="sortcell"><svg width="11" height="11" viewBox="0 0 11 11" fill="none" stroke="#eee"><path d="M.5.5H10.500V10.500H.5ZM3 5.500H8"/></svg><span>Betreff</span><svg class="up" width="12" height="12"><use href="#chev"/></svg></div></th>
        <th>Seitenbeschr...</th><th>Kommentare</th><th>Verfasser</th><th></th>
        <th class="tune"><svg width="18" height="17" viewBox="0 0 54 51" fill="none" stroke="#ddd" stroke-width="3"><path d="M8 3V48M27 3V48M45 3V48"/><g fill="#ddd"><circle cx="8" cy="13" r="4"/><circle cx="27" cy="35" r="4"/><circle cx="45" cy="13" r="4"/></g></svg></th>
        <th class="label">Etikett<i class="hl"></i></th><th>Farbe</th><th>Ebene</th><th>Raum</th>
      </tr></thead>
      <tbody>
        <tr class="group"><td><div class="grp"><svg class="c12" width="12" height="12"><use href="#chev"/></svg><span><b>Deckbelag SDA</b> (3)</span></div></td><td></td><td></td><td></td><td></td><td></td><td></td><td></td><td></td><td></td></tr>
        <tr><td><div class="subj"><svg width="20" height="22"><use href="#markup"/></svg><span>Deckbelag SDA</span></div></td><td>[1] 131 Sit Teil 1</td><td>163.32 m²</td><td>FarganusD</td><td>06.07.2022 13:21:17</td><td></td><td>223.423.301</td><td><i class="sw"></i></td><td><div class="layer"><svg width="14" height="14"><use href="#eye"/></svg>primar kies</div></td><td></td></tr>
        <tr><td><div class="subj"><svg width="20" height="22"><use href="#markup"/></svg><span>Deckbelag SDA</span></div></td><td>[1] 133 Sit Teil 3</td><td>265.02 m²</td><td>FarganusD</td><td>06.07.2022 13:21:17</td><td></td><td>223.423.301</td><td><i class="sw"></i></td><td><div class="layer"><svg width="14" height="14"><use href="#eye"/></svg>Sekundär</div></td><td></td></tr>
        <tr><td><div class="subj"><svg width="20" height="22"><use href="#markup"/></svg><span>Deckbelag SDA</span></div></td><td>[1] 134 Sit Teil 4</td><td>118.5 m²</td><td>FarganusD</td><td>06.07.2022 13:21:17</td><td></td><td>223.423.301</td><td><i class="sw"></i></td><td><div class="layer"><svg width="14" height="14"><use href="#eye"/></svg>Sekundär</div></td><td></td></tr>
        <tr class="next"><td><div class="grp"><span><b>Doppel Bundstein</b> (4)</span></div></td><td></td><td></td><td></td><td></td><td></td><td></td><td></td><td></td><td></td></tr>
      </tbody>
    </table>
  </div>
</section>
</body>
</html>
```
FILE: styles.css
```css
* { box-sizing: border-box; }
html, body { height: 100%; }
body { margin: 0; display: flex; flex-direction: column; overflow: hidden; background: #2d2d2d; color: #fff; font: 12px/16px Roboto, "Liberation Sans", sans-serif; }
button { background: none; border: 0; padding: 0; margin: 0; color: inherit; font: inherit; display: flex; align-items: center; justify-content: center; }
input { font: inherit; color: inherit; margin: 0; }
a { color: inherit; text-decoration: none; }
h2, h3 { margin: 0; }
svg { display: block; flex: none; }
table { border-collapse: separate; border-spacing: 0; table-layout: fixed; width: 100%; }
th, td { padding: 0; text-align: left; }
b { font-weight: 500; }
.defs { position: absolute; width: 0; height: 0; }
.c12 { display: inline-block; }

.titlebar { flex: none; height: 24px; border-top: 1px solid #000; background: #fff; color: #000; display: flex; align-items: center; gap: 1px; padding: 0 0 1px 3px; }
.vmbar { flex: none; height: 32px; background: #fff; border-top: 1px solid #e4e4e4; border-bottom: 1px solid #ddd; color: #000; display: flex; align-items: center; padding: 0 0 2px 7px; }
.player { width: 48px; justify-content: space-between; }
.tri { border: 4px solid transparent; border-top-color: #000; border-bottom: 0; }
.tri.dim { border-top-color: #888; margin-right: 11px; }
.vsep { width: 1px; height: 18px; background: #ccc; margin: 0 9px; }
.ib + .ib { margin-left: 12px; }

.menubar { flex: none; height: 25px; background: #000; display: flex; align-items: center; font-size: 14px; padding: 0 0 2px 17px; }
.menubar a { margin-right: 24px; white-space: nowrap; }
.menubar a:nth-child(1) { margin-right: 28px; }
.menubar a:nth-child(2) { margin-right: 26px; }
.menubar a:nth-child(4) { margin-right: 26px; }
.menubar a:nth-child(n+5) { margin-right: 22px; }
.menubar a:nth-child(7) { margin-right: 25px; }
.menubar a:nth-child(8) { margin-right: 28px; }
.docbar { flex: none; height: 36px; border-bottom: 1px solid #000; display: flex; align-items: center; padding-left: 7px; }
.docbar .name { margin: 0 10px; }
.outline { border: 1px solid #888; border-radius: 3px; height: 25px; width: 26px; }
.outline.wide { width: 44px; }
.docbar .outline:last-child { margin-left: 10px; }

.work { flex: 1; min-height: 0; display: flex; border-bottom: 1px solid #000; }
.rail { flex: none; width: 36px; border-right: 1px solid #000; overflow: hidden; }
.rail button { width: 35px; height: 35px; }
.rail svg { width: 35px; height: 35px; fill: none; stroke: #fff; stroke-width: 3px; }
.rail .on, .statusbar .on { background: #175480; }
.js { font: bold 18px Roboto, sans-serif; fill: #eee; stroke: none; }

.chest { flex: none; width: 393px; border-right: 1px solid #000; display: flex; flex-direction: column; }
.panelhead { flex: none; height: 34px; padding: 0 0 1px 11px; display: flex; align-items: center; gap: 8px; font-size: 14px; font-weight: 700; }
.scroll { flex: 1; min-height: 0; display: flex; overflow: hidden; }
.sets { flex: 1; background: #d2d2ca; overflow: hidden; color: #000; }
.sbar { flex: none; width: 17px; background: #efefef; border-left: 1px solid #fff; padding: 111px 0 0 7px; }
.sbar i { display: block; width: 2px; height: 175px; background: #888; }
.tools { display: flex; height: 48px; padding-left: 4px; }
.tools svg { width: 40px; height: 48px; font: 34px "Liberation Sans", sans-serif; }
.tools .one { font-size: 27px; }
.tools.first { margin-top: -18px; }
.sets h3 { height: 35px; background: #2d2d2d; color: #fff; display: flex; align-items: center; padding: 0 28px 1px 9px; gap: 10px; font-size: 12px; font-weight: 400; }
.sets h3 button { margin-left: auto; }
.symbols .w44 { width: 44px; }
.symbols .w124 { width: 124px; }
.symbols th { height: 18px; background: #dcdcd3; font-weight: 400; line-height: 18px; }
.symbols td { height: 32px; }
.symbols .gap td { height: 6px; }
.symbols td + td, .symbols th + th { border-left: 1px solid #c2c2ba; padding-left: 2px; }
.zoomrow { flex: none; height: 36px; display: flex; align-items: center; padding: 0 10px 0 12px; gap: 15px; }
.zoomrow input { flex: 1; min-width: 0; appearance: none; height: 12px; background: none; }
.zoomrow input::-webkit-slider-runnable-track { height: 4px; border-radius: 2px; background: #3d3d3d; }
.zoomrow input::-webkit-slider-thumb { appearance: none; width: 12px; height: 12px; border-radius: 50%; background: #8a8a8a; margin-top: -4px; }

.view { flex: 1; min-width: 0; display: flex; flex-direction: column; }
.tabs { flex: none; height: 35px; display: flex; }
.tab { background: #424242; border-right: 1px solid #000; display: flex; align-items: center; gap: 17px; padding: 0 10px 1px 9px; }
.canvas { flex: 1; min-height: 0; background: #4d4d4d; padding-left: 183px; overflow: hidden; }
.plan { width: 100%; height: 369px; border-left: 1px solid #0a84d8; border-bottom: 1px solid #0a84d8; }
.mul { mix-blend-mode: multiply; }
.lbl { font: bold 9px "Liberation Sans", sans-serif; fill: red; }
.lbl .thin { font-weight: 400; font-size: 8px; }
.lbl .dark { fill: #400; font-weight: 400; font-size: 11px; }
.lbl .grey { fill: #777; font-weight: 400; font-size: 14px; }
.sheet { font-family: "Liberation Sans", sans-serif; }
.s8 { font-size: 7px; fill: #333; }
.s10 { font-size: 10px; }
.s12 { font-size: 12px; }
.s18 { font-size: 18px; }
.s24 { font-size: 23px; }
.bold { font-weight: 700; }
.statusbar { flex: none; height: 36px; display: flex; align-items: center; }
.statusbar button { width: 36px; height: 36px; }
.statusbar button svg { width: 18px; height: 18px; fill: none; stroke: #fff; stroke-width: 3px; }
.statusbar .dimmed svg { stroke: #666; }
.vline { width: 1px; height: 18px; background: #888; margin: 0 2px; }
.push { flex: 1; }
.pagebox { width: 246px; height: 22px; margin-left: 1px; padding: 0 4px 2px 0; background: none; border: 1px solid #888; border-radius: 2px; text-align: center; }

.bottom { flex: none; height: 167px; display: flex; border-bottom: 2px solid #fff; }
.list { flex: 1; min-width: 0; }
.listhead { height: 36px; display: flex; align-items: center; padding-left: 11px; }
.listhead h2 { display: flex; align-items: center; justify-content: space-between; width: 97px; font-size: 14px; font-weight: 700; }
.hide { margin: 0 9px 0 12px; }
.search { width: 326px; height: 27px; border: 1px solid #888; border-radius: 2px; display: flex; align-items: center; padding: 0 7px 0 6px; }
.search input { flex: 1; min-width: 0; border: 0; background: none; padding: 0 7px 2px; }
.filter { width: 83px; justify-content: flex-start; margin-left: 28px; gap: 6px; font-size: 14px; font-weight: 700; }
.share { position: relative; margin-left: 28px; }
.share > button { width: 36px; height: 36px; background: #27343e; }
.hl { position: absolute; border: 3px solid #0cae8e; box-shadow: 1px 2px 4px rgba(0, 0, 0, .4); pointer-events: none; z-index: 3; }
.share > .hl { inset: 0 -14px -3px -12px; }
.menu { position: absolute; left: 0; top: 35px; width: 176px; z-index: 2; background: #3d3d3d; border: 1px solid #000; padding: 0 0 2px; }
.menu button { width: 100%; height: 26px; justify-content: flex-start; padding-left: 39px; white-space: nowrap; }
.menu button svg { margin: 0 16px 0 -34px; }
.menu .hl { left: 24px; top: 21px; width: 116px; height: 62px; }

.markups th { height: 35px; background: #3d3d3d; font-weight: 500; padding: 0 0 3px 9px; white-space: nowrap; overflow: hidden; }
.markups td { height: 22px; padding: 0 0 2px 2px; white-space: nowrap; }
.markups th + th, .markups td + td { border-left: 1px solid #888; }
.k1 { width: 202px; } .k2 { width: 92px; } .k3 { width: 218px; } .k4 { width: 94px; } .k5 { width: 126px; }
.k6 { width: 124px; } .k7 { width: 113px; } .k8 { width: 80px; } .k9 { width: 120px; }
.markups .sorted { border-bottom: 2px solid #0a84d8; padding: 0 10px 0 5px; }
.sortcell { display: flex; align-items: center; }
.sortcell span { margin: 0 auto 0 15px; }
.up { transform: rotate(180deg); }
.markups .tune svg { margin-left: auto; margin-right: 8px; }
.markups .label { position: relative; overflow: visible; }
.label .hl { left: -6px; top: -2px; width: 92px; height: 133px; }
.markups .group td { height: 20px; }
.grp { display: flex; align-items: center; gap: 10px; padding-left: 7px; }
.markups td:first-child { padding-bottom: 0; }
.subj { display: flex; align-items: center; gap: 3px; height: 22px; padding-left: 42px; }
.subj span { padding-bottom: 2px; }
.layer { display: flex; align-items: center; gap: 7px; padding-left: 2px; }
.sw { display: block; width: 12px; height: 12px; background: #000; margin-left: 31px; }
.markups .next td { border-top: 2px solid #888; height: 20px; vertical-align: top; }
.next .grp { padding-left: 29px; }
```
